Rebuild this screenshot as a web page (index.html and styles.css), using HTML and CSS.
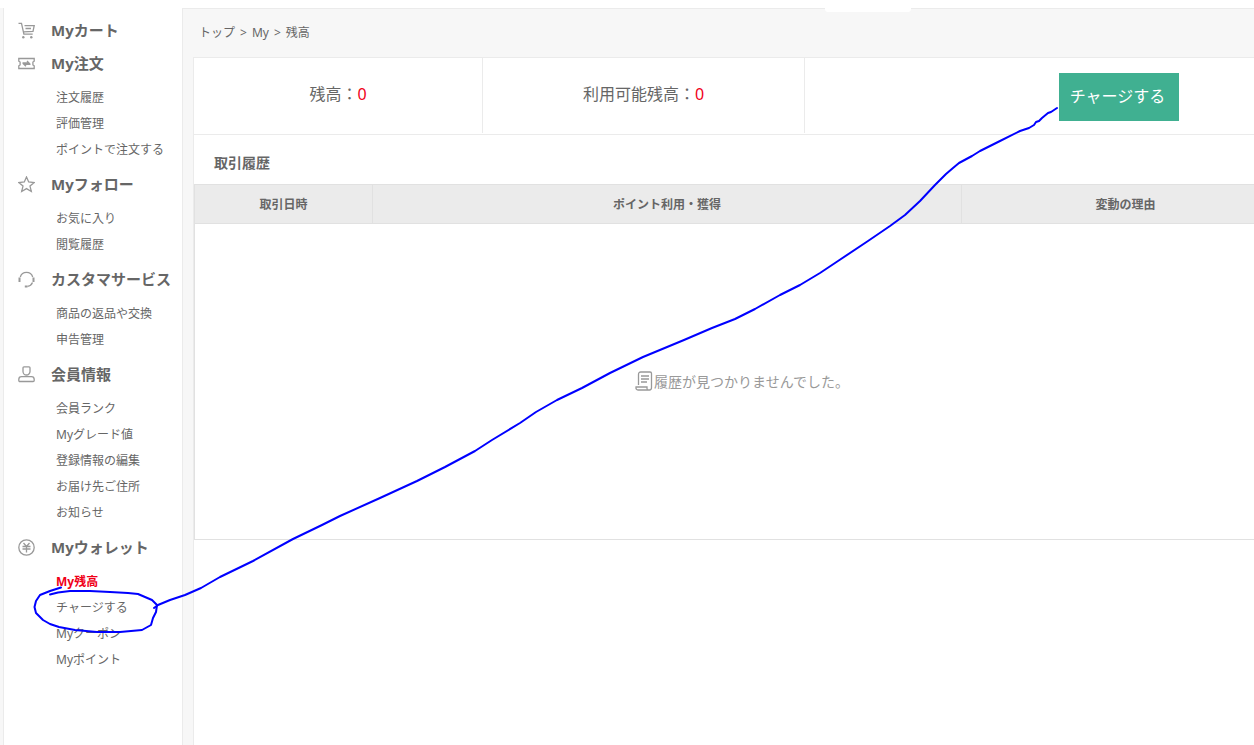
FILE: index.html
```html
<!DOCTYPE html>
<html lang="ja">
<head>
<meta charset="utf-8">
<title>残高</title>
<link rel="stylesheet" href="styles.css">
</head>
<body>
<div class="page">
  <div class="tab-notch"></div>
  <nav class="sidebar" aria-label="My">
    <h2 class="group"><svg class="icon" viewBox="0 0 17 17"><path d="M.5 1.300h3l2.400 10.900h8.800M6.500 3.700h9.700l-1.200 5.600-9.500.6M7.500 6.500h5.500"/><circle class="dot" cx="5.300" cy="15.200" r="1.200"/><circle class="dot" cx="13.300" cy="15.200" r="1.200"/></svg><a href="#cart">Myカート</a></h2>

    <h2 class="group"><svg class="icon" viewBox="0 0 17 17"><path d="M.8 3.500h15.400v2.700l-1.300.8v3l1.300.8v2.700H.8v-2.700L2.100 10V7L.8 6.200z"/><path d="M4.500 8h6.500L9 6M12.500 9.300H6L8 11.200"/></svg><a href="#orders">My注文</a></h2>
    <ul class="links">
      <li><a href="#history">注文履歴</a></li>
      <li><a href="#reviews">評価管理</a></li>
      <li><a href="#point-order">ポイントで注文する</a></li>
    </ul>

    <h2 class="group"><svg class="icon" viewBox="0 0 17 17"><path d="M8.500 1l2.200 5 5.500.5-4.200 3.600 1.300 5.400-4.800-2.900-4.800 2.900L5 10.100.8 6.500l5.500-.5z"/></svg><a href="#follow">Myフォロー</a></h2>
    <ul class="links">
      <li><a href="#favorites">お気に入り</a></li>
      <li><a href="#viewed">閲覧履歴</a></li>
    </ul>

    <h2 class="group"><svg class="icon" viewBox="0 0 17 17"><path d="M2.300 6a6.500 6.500 0 0 1 12.400 0M14.500 11.500c-.8 2-2.500 3.500-5 3.800"/><path class="bold" d="M1.500 6.500v4.500M15.500 6.500v4.500M6.800 15.500h2.700"/></svg><a href="#service">カスタマサービス</a></h2>
    <ul class="links">
      <li><a href="#returns">商品の返品や交換</a></li>
      <li><a href="#claims">申告管理</a></li>
    </ul>

    <h2 class="group"><svg class="icon" viewBox="0 0 17 17"><path d="M6 .8h5c.6 0 1 .4 1 1v3.700a3.500 3.500 0 0 1-7 0V1.800c0-.6.4-1 1-1zM3.500 10.700h10c1.500 0 2.700 1.200 2.700 2.700v1c0 .6-.5 1.100-1.100 1.100H1.900c-.6 0-1.100-.5-1.100-1.100v-1c0-1.500 1.200-2.700 2.700-2.700z"/></svg><a href="#member">会員情報</a></h2>
    <ul class="links">
      <li><a href="#rank">会員ランク</a></li>
      <li><a href="#grade">Myグレード値</a></li>
      <li><a href="#edit">登録情報の編集</a></li>
      <li><a href="#address">お届け先ご住所</a></li>
      <li><a href="#news">お知らせ</a></li>
    </ul>

    <h2 class="group"><svg class="icon" viewBox="0 0 17 17"><circle cx="8.500" cy="8.500" r="7.700"/><path d="M5.500 4l3 3.500 3-3.500M4.500 7.500h8M4.500 10h8M8.500 7.500v6"/></svg><a href="#wallet">Myウォレット</a></h2>
    <ul class="links">
      <li><a class="current" href="#balance" aria-current="page">My残高</a></li>
      <li><a href="#charge">チャージする</a></li>
      <li><a href="#coupon">Myクーポン</a></li>
      <li><a href="#point">Myポイント</a></li>
    </ul>
  </nav>

  <main class="main">
    <nav class="breadcrumb" aria-label="breadcrumb"><a href="#top">トップ</a><span>&gt;</span><a href="#my">My</a><span>&gt;</span><span>残高</span></nav>
    <section class="panel">
      <div class="summary">
        <div class="cell">残高：<span class="amount">0</span></div>
        <div class="cell">利用可能残高：<span class="amount">0</span></div>
        <div class="action"><button class="charge" type="button">チャージする</button></div>
      </div>
      <h1 class="title">取引履歴</h1>
      <table class="records">
        <thead>
          <tr><th class="date">取引日時</th><th class="points">ポイント利用・獲得</th><th>変動の理由</th></tr>
        </thead>
        <tbody>
          <tr><td colspan="3"><div class="empty"><svg class="scroll" viewBox="0 0 18 20"><path d="M3.500 14V3.500c0-1.500.8-2.500 2.300-2.500H15c1 0 1.500.5 1.500 1.500v14c0 1.500-.8 2.500-2 2.500H3c-1.500 0-2.300-1.200-2-3h11v1.500c0 1 .6 1.500 1.500 1.500M6 5h8M6 8h8M6 11h6"/></svg>履歴が見つかりませんでした。</div></td></tr>
        </tbody>
      </table>
    </section>
  </main>

  <svg class="ink" width="1254" height="745" viewBox="0 0 1254 745" aria-hidden="true">
    <path d="M61 587.500L50 591L40 595L36 601L34.500 607L36 613L43 620L50 624L59 627L75 630L97 632L120 632L142 630L151 625L153 618L156 612L157 605L152 600L145 597L138 594L128 593L110 592L90 591L70 591L58 592.500L50 594.500"/>
    <path d="M154 608L158 605L170 600L185 595L201 588L220 577L253 561L293 539L322 525L340 516L380 498L417 481L445 467L475 451L492 440L520 423L536 412L557 400L582 388L610 373L643 357L684 340L712 328L735 319L755 309L780 295L800 285L820 273L838 261L868 241L890 226L905 215L920 201L935 185L946 174L953 168L959 163L972 156L980 151L1000 141L1020 131L1029 128L1034 125L1036 122L1039 121L1042 118L1048 113L1051 112L1057 108"/>
  </svg>
</div>
</body>
</html>
```
FILE: styles.css
```css
* {
  box-sizing: border-box;
}

body {
  margin: 0;
  padding-top: 8px;
  background: #fff;
  color: #666;
  font-family: "Noto Sans", "Noto Sans CJK JP", sans-serif;
  font-size: 12px;
}

a {
  color: inherit;
  text-decoration: none;
}

.page {
  display: flex;
  min-height: calc(100vh - 8px);
  padding-left: 3px;
  background: #f7f7f7;
  overflow: hidden;
}

.tab-notch {
  position: absolute;
  top: 8px;
  left: 825px;
  width: 86px;
  height: 4px;
  border-radius: 0 0 3px 3px;
  background: #fff;
}

.sidebar {
  flex: none;
  width: 180px;
  padding: 6px 0 24px 14px;
  border-right: 1px solid #ebebeb;
  border-left: 1px solid #ebebeb;
  background: #fff;
}

.group {
  display: flex;
  align-items: center;
  gap: 16px;
  height: 33px;
  margin: 0;
  font-size: 15px;
  line-height: 33px;
  white-space: nowrap;
}

.icon,
.scroll {
  flex: none;
  fill: none;
  stroke: #999;
  stroke-width: 1.3;
}

.icon {
  width: 17px;
  height: 17px;
}

.bold {
  stroke-width: 2;
}

.dot {
  fill: #999;
  stroke: none;
}

.links {
  margin: 0;
  padding: 5px 0 5px 38px;
  list-style: none;
  line-height: 26px;
  white-space: nowrap;
}

.links li {
  height: 26px;
}

.current {
  color: #f00018;
  font-weight: 700;
}

.main {
  display: flex;
  flex: 1;
  flex-direction: column;
  min-width: 0;
  padding-left: 10px;
  border-top: 1px solid #ebebeb;
}

.breadcrumb {
  display: flex;
  gap: 5px;
  height: 48px;
  padding-left: 6px;
  line-height: 48px;
}

.panel {
  flex: 1;
  border-top: 1px solid #ebebeb;
  border-left: 1px solid #ebebeb;
  background: #fff;
}

.summary {
  display: grid;
  grid-template-columns: 289px 322px 1fr;
  width: calc(100% + 178px);
  height: 77px;
  border-bottom: 1px solid #ebebeb;
  font-size: 16px;
}

.cell {
  margin-bottom: 1px;
  padding-top: 24px;
  border-right: 1px solid #ebebeb;
  line-height: 24px;
  text-align: center;
}

.amount {
  color: #f00018;
}

.action {
  padding-top: 15px;
  text-align: center;
}

.charge {
  height: 48px;
  width: 120px;
  padding: 0 2px 4px 0;
  border: 0;
  background: #40b091;
  color: #fff;
  font: inherit;
}

.title {
  margin: 0;
  padding: 8px 0 1px 20px;
  font-size: 14px;
  line-height: 40px;
}

.records {
  width: calc(100% + 36px);
  border: 1px solid #e1e1e1;
  border-collapse: collapse;
  table-layout: fixed;
}

.records th {
  height: 39px;
  padding: 0;
  border: 1px solid #e1e1e1;
  background: #ebebeb;
}

.records .date {
  width: 178px;
}

.records .points {
  width: 589px;
}

.records td {
  height: 316px;
  padding: 0 0 2px;
}

.empty {
  display: flex;
  align-items: center;
  justify-content: center;
  gap: 1px;
  color: #999;
  font-size: 14px;
}

.scroll {
  width: 18px;
  height: 20px;
}

.ink {
  position: absolute;
  top: 0;
  left: 0;
  fill: none;
  stroke: #00f;
  stroke-width: 2;
  stroke-linecap: round;
  stroke-linejoin: round;
  pointer-events: none;
}
```
